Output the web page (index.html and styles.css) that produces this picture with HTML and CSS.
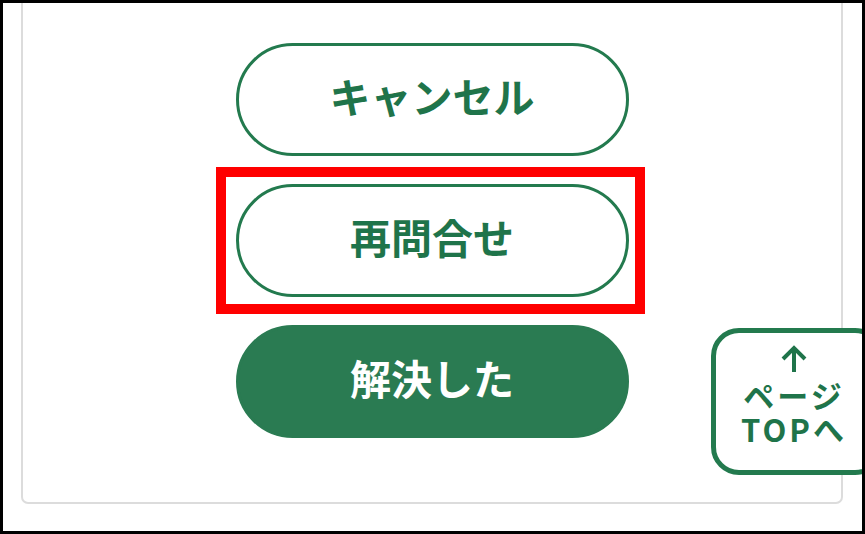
FILE: index.html
```html
<!DOCTYPE html>
<html lang="ja">
<head>
    <meta charset="UTF-8">
    <meta name="viewport" content="width=device-width, initial-scale=1.0">
    <title>お問合せ</title>
    <link rel="stylesheet" href="styles.css">
</head>
<body>
    <div class="frame">
        <div class="card">
            <button type="button" class="btn btn-outline">キャンセル</button>
            <div class="highlight">
                <button type="button" class="btn btn-outline">再問合せ</button>
            </div>
            <button type="button" class="btn btn-fill">解決した</button>
        </div>

        <a href="#" class="page-top">
            <svg class="page-top-arrow" width="28" height="28" viewBox="0 0 28 28">
                <line x1="14" y1="3" x2="14" y2="27" />
                <polyline points="3,14 14,3 25,14" />
            </svg>
            <span class="page-top-line">ページ</span>
            <span class="page-top-line">TOPへ</span>
        </a>
    </div>
</body>
</html>
```

FILE: styles.css
```css
body {
    margin: 0;
    padding: 0;
    background: #fff;
    font-family: "Noto Sans CJK JP", "Noto Sans", sans-serif;
}
.frame {
    position: relative;
    width: 865px;
    height: 534px;
    box-sizing: border-box;
    border: 3px solid #000;
    overflow: hidden;
}
.card {
    display: flex;
    flex-direction: column;
    align-items: center;
    gap: 11px;
    margin: -10px 19px 0 18px;
    padding: 48px 0 64px;
    border: 2px solid #dcdcdc;
    border-radius: 0 0 7px 7px;
}
.btn {
    display: flex;
    align-items: center;
    justify-content: center;
    width: 393px;
    height: 113px;
    box-sizing: border-box;
    padding: 0 0 9px;
    border-radius: 57px;
    font-family: inherit;
    font-size: 41px;
    font-weight: 700;
    cursor: pointer;
}
.btn-outline {
    background: #fff;
    color: #1f744a;
    border: 3px solid #237a4e;
}
.btn-fill {
    background: #2a7b52;
    color: #fff;
    border: 3px solid #2a7b52;
}
.highlight {
    padding: 7px 6px 7px 10px;
    margin-left: -4px;
    border: 10px solid #ff0000;
}
.page-top {
    position: absolute;
    left: 708px;
    top: 325px;
    width: 172px;
    height: 147px;
    box-sizing: border-box;
    border: 5px solid #237a4e;
    border-radius: 28px;
    background: #fff;
    display: flex;
    flex-direction: column;
    align-items: center;
    justify-content: center;
    padding: 0 6px 12px 0;
    color: #1f744a;
    font-size: 31px;
    font-weight: 700;
    letter-spacing: 3px;
    text-decoration: none;
}
.page-top-line {
    display: block;
    height: 34px;
    line-height: 34px;
}
.page-top-arrow {
    margin-bottom: 5px;
    fill: none;
    stroke: #1f744a;
    stroke-width: 4;
}
```
